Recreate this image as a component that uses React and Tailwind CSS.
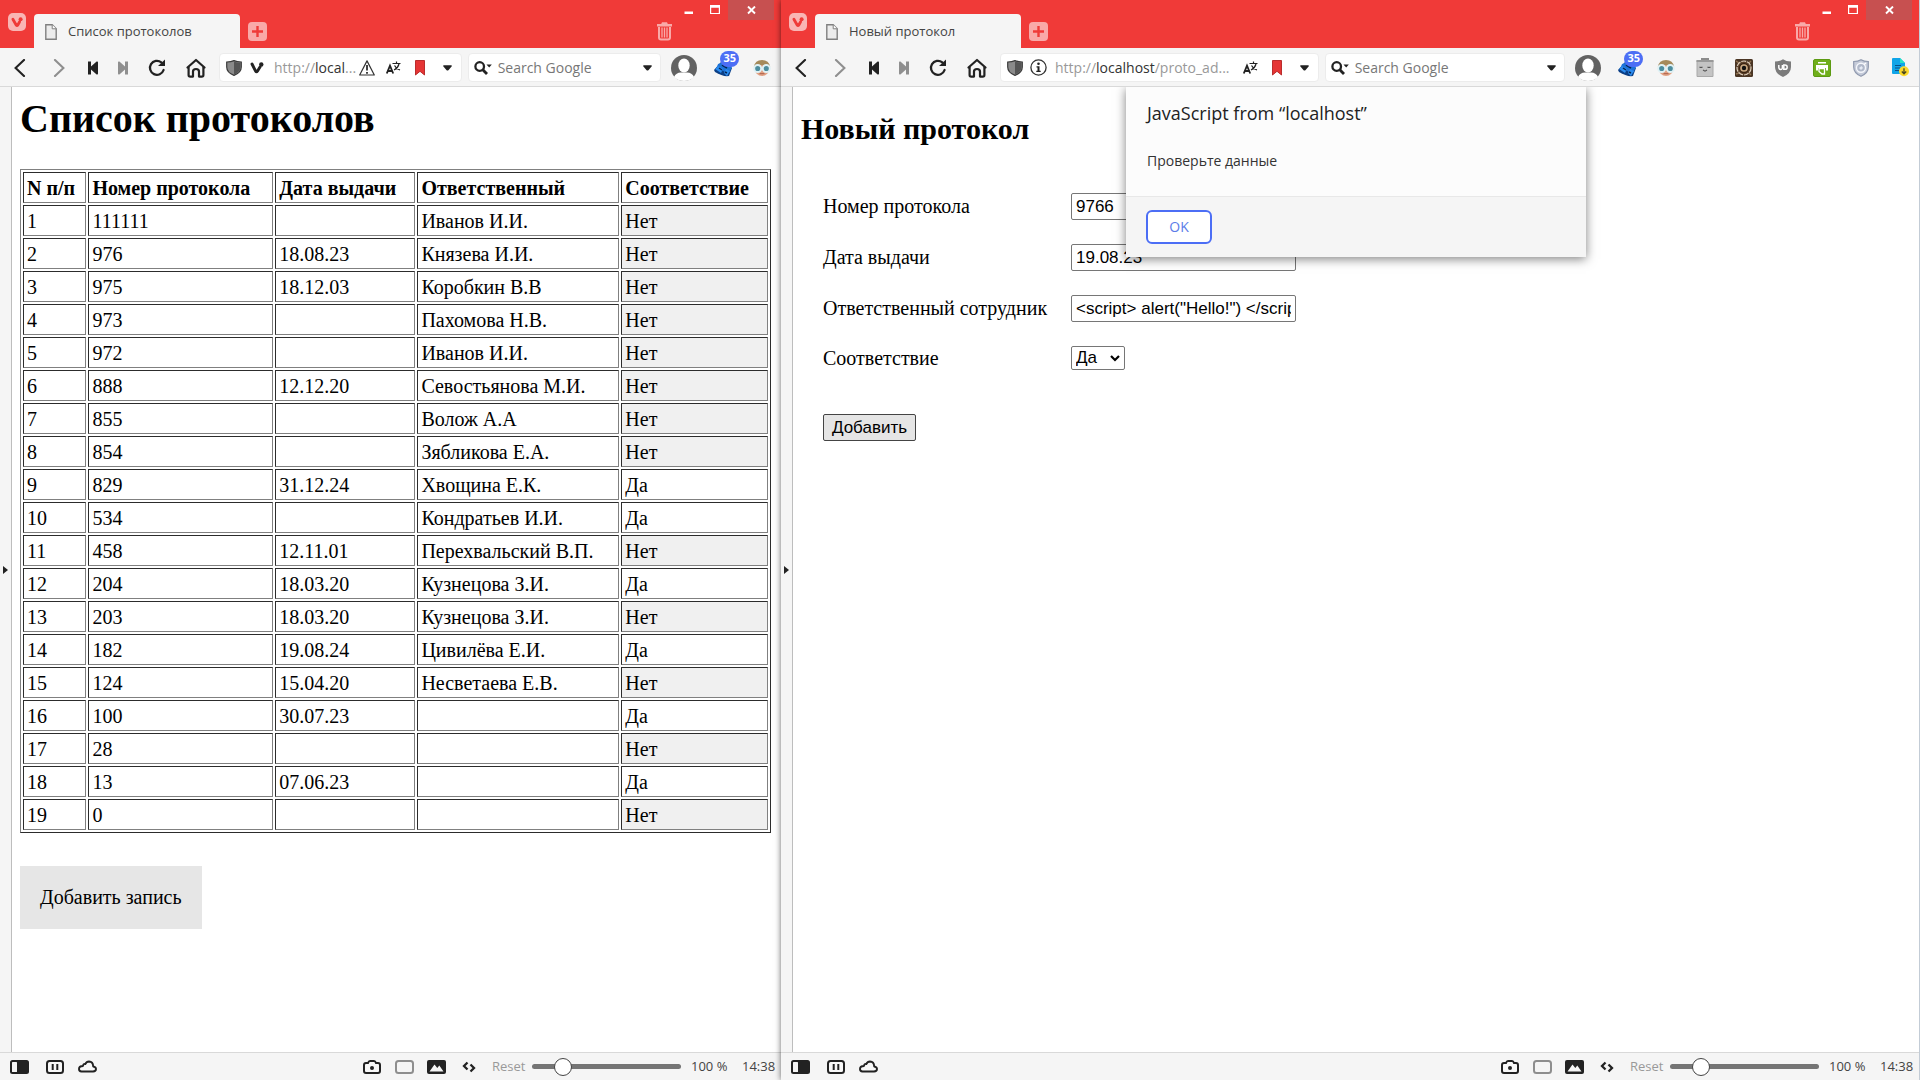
import React from "react";

const UI = "font-['Open_Sans',sans-serif]";

/* ---------- icons ---------- */

const VivaldiBadge = () => (
  <svg width="18" height="18" viewBox="0 0 18 18">
    <rect width="18" height="18" rx="5" fill="#f9b5b4" />
    <path d="M4.9 6.2 8.3 12.2Q9 13.2 9.7 12.2L11.6 8.8" fill="none" stroke="#ef3a38" strokeWidth="2.8" strokeLinecap="round" strokeLinejoin="round" />
    <circle cx="12.6" cy="6.3" r="2" fill="#ef3a38" />
  </svg>
);
const PageIcon = () => (
  <svg width="12" height="16" viewBox="0 0 12 16" className="shrink-0">
    <path d="M.8.8h6.4l4 4v10.4H.8z" fill="#ececec" stroke="#808080" strokeWidth="1.4" />
    <path d="M7.2.8v4h4" fill="#fff" stroke="#808080" />
  </svg>
);
const PlusBadge = () => (
  <svg width="19" height="19" viewBox="0 0 19 19">
    <rect width="19" height="19" rx="4" fill="#f9a9a8" />
    <path d="M9.5 4v11M4 9.5h11" stroke="#ef3a38" strokeWidth="2.4" />
  </svg>
);
const Trash = () => (
  <svg width="15" height="19" viewBox="0 0 15 19">
    <path d="M0 2h4.2L5 .2h5l.8 1.8H15v2.600H0z" fill="#f9a9a8" />
    <path d="M2 5v10.600Q2 17.600 4 17.600h7q2 0 2-2V5" fill="none" stroke="#f9a9a8" strokeWidth="2" />
    <path d="M5 5.500V15.500M7.500 5.500V15.500M10 5.500V15.500" stroke="#f9a9a8" strokeWidth="1.300" />
  </svg>
);
const Chevron = ({ dir, color }) => (
  <svg width="12" height="18" viewBox="0 0 12 18">
    <path d={dir === "left" ? "M10 1 1.600 9l8.400 8" : "M2 1 10.400 9l-8.400 8"} fill="none" stroke={color} strokeWidth="2.100" strokeLinecap="round" />
  </svg>
);
const Skip = ({ dir, color }) => (
  <svg width="10" height="14" viewBox="0 0 10 14">
    <path d={dir === "left" ? "M0 .5h3v5L8.600.600Q10 0 10 1.500v11q0 1.500-1.400.9L3 8.500v5H0z" : "M10 .5H7v5L1.400.600Q0 0 0 1.500v11q0 1.500 1.400.9L7 8.500v5h3z"} fill={color} />
  </svg>
);
const Reload = () => (
  <svg width="18" height="18" viewBox="0 0 18 18">
    <path d="M13.300 3.300A7 7 0 1 0 15.600 11" fill="none" stroke="#222" strokeWidth="2.300" strokeLinecap="round" />
    <path d="M17 .5V7h-7z" fill="#222" />
  </svg>
);
const HomeIcon = () => (
  <svg width="20" height="20" viewBox="0 0 20 20">
    <path d="M1.500 9.500 10 2l8.500 7.500" fill="none" stroke="#222" strokeWidth="2.200" strokeLinecap="round" strokeLinejoin="round" />
    <path d="M2.600 9v8q0 1.600 1.600 1.600H7v-5Q7 11 10 11t3 2.600v5h2.800q1.600 0 1.600-1.600V9" fill="none" stroke="#222" strokeWidth="2.200" strokeLinejoin="round" />
  </svg>
);
const Shield = () => (
  <svg width="16" height="16" viewBox="0 0 16 16" className="shrink-0">
    <path d="M.7 2Q5 2 8 .600 11 2 15.300 2V7q0 5.500-7.300 8.400Q.7 12.500.7 7z" fill="#8a8a8a" stroke="#3c3c3c" strokeWidth="1.200" />
    <path d="M8 1.400q3 1.200 6.600 1.200V7q0 4.800-6.600 7.700z" fill="#555" />
  </svg>
);
const VMark = () => (
  <svg width="14" height="12" viewBox="0 0 14 12">
    <path d="M2 2 5.600 9.200Q6.500 10.500 7.400 9.200L10 5" fill="none" stroke="#222" strokeWidth="2.900" strokeLinecap="round" strokeLinejoin="round" />
    <circle cx="11.300" cy="2.500" r="2.200" fill="#222" />
  </svg>
);
const Info = () => (
  <svg width="17" height="17" viewBox="0 0 17 17">
    <circle cx="8.500" cy="8.500" r="7.600" fill="#fff" stroke="#333" strokeWidth="1.300" />
    <circle cx="8.500" cy="4.700" r="1.300" fill="#222" />
    <path d="M6.500 7.200h3v4.500h1.200V13H6.300v-1.300h1.200V8.500h-1z" fill="#222" />
  </svg>
);
const Warn = () => (
  <svg width="16" height="16" viewBox="0 0 16 16" className="ml-[3px] shrink-0">
    <path d="M8 .900 15.300 15H.7z" fill="#fff" stroke="#333" strokeWidth="1.200" strokeLinejoin="round" />
    <path d="M8 5v5.500M8 12v1.700" stroke="#222" strokeWidth="1.700" />
  </svg>
);
const Translate = () => (
  <svg width="15" height="14" viewBox="0 0 15 14">
    <path d="M.8 12.500 4 4.700 7.200 12.500M2 10h4" fill="none" stroke="#222" strokeWidth="1.800" />
    <path d="M6.500 2.500h8M10.500.500v2M8 9q4-2 5-6M8.500 4.500q1.500 3 5.500 4.500" fill="none" stroke="#222" strokeWidth="1.200" />
  </svg>
);
const Bookmark = () => (
  <svg width="10" height="16" viewBox="0 0 10 16">
    <path d="M.5.500h9V15L5 11.300.5 15z" fill="#e53535" stroke="#b32020" strokeWidth=".9" />
  </svg>
);
const Caret = () => (
  <svg width="9" height="6" viewBox="0 0 10 6">
    <path d="M1 0h8q1.500.300.500 1.400L6 5.400q-1 .9-2 0L.5 1.400Q-.5.300 1 0z" fill="#222" />
  </svg>
);
const SearchGlyph = () => (
  <svg width="18" height="14" viewBox="0 0 18 14">
    <circle cx="5.700" cy="5.500" r="4.300" fill="none" stroke="#222" strokeWidth="2.300" />
    <path d="m8.800 8.700 4.200 4.300" stroke="#222" strokeWidth="2.800" />
    <path d="M12.500 3.500h5.300L15.200 6.500z" fill="#222" />
  </svg>
);
const Avatar = () => (
  <svg width="26" height="26" viewBox="0 0 26 26">
    <circle cx="13" cy="13" r="13" fill="#626262" />
    <ellipse cx="13" cy="10.500" rx="5.700" ry="7" fill="#fff" />
    <path d="M3 22q2-4.500 7-4.500h6q5 0 7 4.500-4 4-10 4T3 22z" fill="#fff" />
  </svg>
);
const Cards = () => (
  <svg width="26" height="26" viewBox="0 0 26 26">
    <path d="m4 15 7-8 11 6-3 8q-6 1-14-4z" fill="#0b3f86" />
    <path d="m8 9 6-2 8 5-3 6-4-1-8-5z" fill="#1d72d8" />
    <path d="m5 14 3-3 5 3-2 4zM14 18l2-4 4 2-3 5z" fill="#2b8cf0" />
    <path d="m12 10 5 3M9 13l3 2M15 17l2 1" stroke="#04244f" strokeWidth="1.500" />
  </svg>
);
const Face = () => (
  <svg width="18" height="18" viewBox="0 0 18 18">
    <circle cx="9" cy="9.500" r="7.500" fill="#e2a183" />
    <path d="M.8 8Q2 1 9 1t8.200 7q-2-1-3.200-2.500-5 1.500-10 0Q3 7 .8 8z" fill="#a58a5b" />
    <circle cx="4.700" cy="9.500" r="3.500" fill="#4d8d9e" stroke="#dff1f5" strokeWidth="1.900" />
    <circle cx="13.300" cy="9.500" r="3.500" fill="#4d8d9e" stroke="#dff1f5" strokeWidth="1.900" />
    <path d="M6.500 14.700h5" stroke="#a8604a" />
  </svg>
);
const Clipboard = () => (
  <svg width="18" height="19" viewBox="0 0 18 19">
    <path d="M5 0h8v3H5z" fill="#8b8b8b" />
    <path d="M1 2.500h16V18.500H1z" fill="#c4c4c4" stroke="#a8a8a8" />
    <path d="M.5 3h17" stroke="#999" strokeWidth="2" />
    <path d="M3.500 9q1.500 1 3 0M11.500 9q1.500 1 3 0M7 12l2 1.200 2-1.200" fill="none" stroke="#555" strokeWidth="1.100" />
  </svg>
);
const Eye = () => (
  <svg width="18" height="18" viewBox="0 0 18 18">
    <rect width="18" height="18" rx="1.500" fill="#4a3524" />
    <path d="m1 2 3 2M16 2l-2 2M1 15l3-1M16 16l-2-2" stroke="#8f7150" strokeWidth="1.500" />
    <circle cx="9" cy="9" r="7" fill="#5f432c" stroke="#ddcfbd" strokeWidth="1.200" strokeDasharray="5 1" />
    <circle cx="9" cy="9" r="4.500" fill="#c7a67f" stroke="#3a2413" strokeWidth="1.300" />
    <circle cx="9" cy="9" r="2.200" fill="#111" />
  </svg>
);
const UShield = () => (
  <svg width="18" height="18" viewBox="0 0 18 18">
    <path d="M1 2.500Q6 2.500 9 .300q3 2.200 8 2.200V8q0 6.500-8 10Q1 14.500 1 8z" fill="#7b7b7b" />
    <path d="M4.800 6v2.600q0 1.800 1.800 1.800T8.400 8.600V6" fill="none" stroke="#fff" strokeWidth="1.500" />
    <path d="M9.800 6.100h1q2.400 0 2.400 2.100t-2.400 2.100h-1z" fill="none" stroke="#fff" strokeWidth="1.500" />
  </svg>
);
const Printer = () => (
  <svg width="18" height="18" viewBox="0 0 18 18">
    <rect x=".5" y=".5" width="17" height="17" rx="1.500" fill="#6fae1a" stroke="#5c9a12" />
    <path d="M5 3h8v1.500H5zM3 6h12v5.500h-2V9H5v2.500H3z" fill="#fff" />
    <path d="M6 9.500h5.500V15H9l-3-2.500z" fill="#6fae1a" stroke="#fff" strokeWidth="1.300" />
  </svg>
);
const PaleShield = () => (
  <svg width="16" height="18" viewBox="0 0 16 18">
    <path d="M.7 2.500Q5 2.500 8 .700q3 1.800 7.300 1.800V8q0 6-7.300 9.300Q.7 14 .7 8z" fill="#c5cbd9" stroke="#8f99ae" strokeWidth="1.200" />
    <circle cx="8" cy="8.700" r="4.500" fill="#b0b8c9" stroke="#f4f6fb" strokeWidth="1.400" />
    <path d="m6 9 2.500-2 1.500 2-2 2z" fill="#e5eaf4" />
    <path d="m11 5.500 2-1.500" stroke="#fff" strokeWidth="1.400" />
  </svg>
);
const DocDown = () => (
  <svg width="18" height="19" viewBox="0 0 18 19">
    <path d="M1 1q0-1 1-1h7l5 5v11H2q-1 0-1-1z" fill="#10a5e8" />
    <path d="M9 0v5h5z" fill="#25e4c5" />
    <path d="M4 7.500h6M4 10h5M4 12.500h4" stroke="#0a4f87" strokeWidth="1.200" />
    <circle cx="13" cy="13.300" r="5" fill="#fcd92b" />
    <path d="M13 10.300v5M10.800 13.500l2.200 2.300 2.200-2.300" fill="none" stroke="#4a4620" strokeWidth="1.300" />
  </svg>
);
const PanelIcon = () => (
  <svg width="19" height="14" viewBox="0 0 19 14">
    <rect width="19" height="14" rx="2.500" fill="#222" />
    <rect x="2" y="2" width="5" height="10" rx=".5" fill="#f5f5f5" />
  </svg>
);
const TileIcon = () => (
  <svg width="18" height="14" viewBox="0 0 18 14">
    <rect x="1" y="1" width="16" height="12" rx="2.500" fill="#f8f8f8" stroke="#222" strokeWidth="2" />
    <path d="M6.700 4v6M11.300 4v6" stroke="#222" strokeWidth="2" />
  </svg>
);
const CloudIcon = () => (
  <svg width="19" height="13" viewBox="0 0 19 13">
    <path d="M3.500 11.500h11.500q3-.200 3-2.500 0-2-2.800-2.500Q15 1.600 11 1.500 8.500 1.500 7.300 4 5.300 3.500 5 6 1 6.200 1 9q0 2.300 2.500 2.500z" fill="#f8f8f8" stroke="#222" strokeWidth="1.900" strokeLinejoin="round" />
  </svg>
);
const CameraIcon = () => (
  <svg width="18" height="14" viewBox="0 0 18 14">
    <path d="M3 3h2q.700-2 2-2h4q1.300 0 2 2h2q2 0 2 2v6q0 2-2 2H3q-2 0-2-2V5q0-2 2-2z" fill="#f8f8f8" stroke="#222" strokeWidth="2" />
    <circle cx="9" cy="8" r="2" fill="#222" />
  </svg>
);
const FrameIcon = () => (
  <svg width="19" height="14" viewBox="0 0 19 14">
    <rect x="1" y="1" width="17" height="12" rx="2.500" fill="none" stroke="#8e8e8e" strokeWidth="2" />
  </svg>
);
const ImageIcon = () => (
  <svg width="19" height="14" viewBox="0 0 19 14">
    <rect width="19" height="14" rx="2" fill="#222" />
    <path d="m2.500 11.500 5-7 2.800 3.500 2-2.500 4.200 6z" fill="#f5f5f5" />
  </svg>
);
const CodeIcon = () => (
  <svg width="14" height="12" viewBox="0 0 14 12">
    <path d="M5.500 1.500 2 5l3.500 3.500M8.500 3.500 12 7l-3.500 3.500" fill="none" stroke="#222" strokeWidth="2.300" />
  </svg>
);

/* ---------- browser chrome ---------- */

const IconButton = ({ label, className = "", children }) => (
  <button type="button" aria-label={label} className={`flex shrink-0 items-center justify-center ${className}`}>
    {children}
  </button>
);

const extensions = [
  ["Читалка", Face],
  ["Буфер", Clipboard],
  ["Глаз", Eye],
  ["Блокировщик", UShield],
  ["Печать", Printer],
  ["Защита", PaleShield],
  ["Загрузки", DocDown],
];

function TitleBar({ title }) {
  return (
    <header className="flex h-12 items-start bg-[#f03a38]">
      <IconButton label="Меню" className="mt-[13px] ml-2"><VivaldiBadge /></IconButton>
      <div className="mt-[14px] ml-2 flex h-[34px] w-[206px] items-center gap-[11px] rounded-t-sm bg-[#f5f5f5] pt-[2px] pl-[11px] text-[13px] text-[#444]">
        <PageIcon />
        <span className="truncate">{title}</span>
      </div>
      <IconButton label="Новая вкладка" className="mt-[22px] ml-2"><PlusBadge /></IconButton>
      <div className="flex-1" />
      <IconButton label="Корзина" className="mt-[22px] mr-1"><Trash /></IconButton>
      <IconButton label="Свернуть" className="h-5 w-[25px]">
        <svg width="10" height="12" viewBox="0 0 10 12"><path d="M.5 7.500h8.500v2.500H.5z" fill="#fff" /></svg>
      </IconButton>
      <IconButton label="Развернуть" className="h-5 w-[27px]">
        <svg width="10" height="10" viewBox="0 0 10 10"><path d="M0 0h10v9H0zM1.200 2.700v5.200h7.600V2.700z" fill="#fff" fillRule="evenodd" /></svg>
      </IconButton>
      <IconButton label="Закрыть" className="mr-[7px] h-5 w-[46px] bg-[#c75050]">
        <svg width="9" height="9" viewBox="0 0 9 9"><path d="m1 .5 7 7M8 .5 1 7.500" stroke="#fff" strokeWidth="1.900" /></svg>
      </IconButton>
    </header>
  );
}

function Toolbar({ siteIcon, url, warn, extCount }) {
  return (
    <nav className="flex h-[39px] items-center border-b border-[#d9d9d9] bg-[#f5f5f5] pt-px">
      <IconButton label="Назад" className="h-9 w-[39px]"><Chevron dir="left" color="#222" /></IconButton>
      <IconButton label="Вперёд" className="h-9 w-[39px]"><Chevron dir="right" color="#8f8f8f" /></IconButton>
      <IconButton label="В начало" className="h-9 w-[30px]"><Skip dir="left" color="#222" /></IconButton>
      <IconButton label="В конец" className="h-9 w-[30px]"><Skip dir="right" color="#8f8f8f" /></IconButton>
      <IconButton label="Обновить" className="h-9 w-[38px]"><Reload /></IconButton>
      <IconButton label="Домой" className="h-9 w-[40px]"><HomeIcon /></IconButton>
      <div className="ml-[3px] flex h-[29px] min-w-0 grow-[76] basis-[166px] items-center rounded border border-[#ececec] bg-white pl-[6px]">
        <Shield />
        <span className="flex w-8 shrink-0 justify-center pr-[2px]">{siteIcon}</span>
        <span className="shrink-0 pt-px text-sm whitespace-nowrap text-[#999]">{url}</span>
        {warn && <Warn />}
        <span className="min-w-0 flex-1" />
        <IconButton label="Перевести" className="w-[27px]"><Translate /></IconButton>
        <IconButton label="Закладка" className="w-[27px]"><Bookmark /></IconButton>
        <IconButton label="История адресов" className="w-[27px]"><Caret /></IconButton>
      </div>
      <div className="ml-[6px] flex h-[29px] min-w-0 grow-[47] basis-[146px] items-center rounded border border-[#ececec] bg-white pr-[8px] pl-[5px]">
        <SearchGlyph />
        <input aria-label="Поиск" placeholder="Search Google" className="ml-[6px] w-0 min-w-0 flex-1 bg-transparent pt-px text-sm text-[#333] outline-none placeholder:text-[#777]" />
        <IconButton label="Варианты поиска"><Caret /></IconButton>
      </div>
      <IconButton label="Профиль" className="ml-[3px] h-9 w-[39px]"><Avatar /></IconButton>
      <IconButton label="Карточки" className="relative h-9 w-[39px]">
        <Cards />
        <span className="absolute top-px right-[3px] flex h-4 items-center rounded-full bg-[#4c6ef5] px-[3px] text-[11px] font-bold text-white">35</span>
      </IconButton>
      {extensions.slice(0, extCount).map(([label, Icon]) => (
        <IconButton key={label} label={label} className="h-9 w-[39px]"><Icon /></IconButton>
      ))}
    </nav>
  );
}

function StatusBar({ id }) {
  return (
    <footer className="flex h-7 items-center border-t border-[#d9d9d9] bg-[#f5f5f5] pr-[6px] pl-[10px] text-[13px] text-[#444]">
      <IconButton label="Панель"><PanelIcon /></IconButton>
      <IconButton label="Мозаика" className="ml-[17px]"><TileIcon /></IconButton>
      <IconButton label="Синхронизация" className="ml-[14px]"><CloudIcon /></IconButton>
      <div className="flex-1" />
      <IconButton label="Снимок"><CameraIcon /></IconButton>
      <IconButton label="Рамка" className="ml-[14px]"><FrameIcon /></IconButton>
      <IconButton label="Изображения" className="ml-[13px]"><ImageIcon /></IconButton>
      <IconButton label="Код" className="ml-4"><CodeIcon /></IconButton>
      <button type="button" className="ml-4 w-[32px] text-[#999]">Reset</button>
      <input
        id={id}
        type="range"
        aria-label="Масштаб"
        min="20"
        max="500"
        defaultValue="100"
        className="ml-2 h-[5px] w-[149px] appearance-none rounded-full bg-[#757575] [&::-webkit-slider-thumb]:size-[18px] [&::-webkit-slider-thumb]:appearance-none [&::-webkit-slider-thumb]:rounded-full [&::-webkit-slider-thumb]:border [&::-webkit-slider-thumb]:border-[#444] [&::-webkit-slider-thumb]:bg-white"
      />
      <label htmlFor={id} className="ml-[10px] w-[51px] whitespace-nowrap">100 %</label>
      <span className="w-[33px] whitespace-nowrap">14:38</span>
    </footer>
  );
}

function BrowserWindow({ id, title, siteIcon, url, warn, extCount, className = "", children }) {
  return (
    <section className={`flex min-w-0 flex-col bg-white ${UI} ${className}`}>
      <TitleBar title={title} />
      <Toolbar siteIcon={siteIcon} url={url} warn={warn} extCount={extCount} />
      <div className="flex flex-1">
        <aside className="flex w-3 shrink-0 items-center border-r border-[#bdbdbd] bg-[#f5f5f5]">
          <IconButton label="Показать панель" className="ml-[3px]">
            <svg width="5" height="8" viewBox="0 0 5 8"><path d="M0 0v8l5-4z" fill="#222" /></svg>
          </IconButton>
        </aside>
        <main className="relative min-w-0 flex-1 px-2 pt-[10px] font-['Liberation_Serif',serif] text-[20px] leading-[23px] text-black">
          {children}
        </main>
      </div>
      <StatusBar id={id} />
    </section>
  );
}

/* ---------- pages ---------- */

const rows = [
  ["111111", "", "Иванов И.И.", "Нет"],
  ["976", "18.08.23", "Князева И.И.", "Нет"],
  ["975", "18.12.03", "Коробкин В.В", "Нет"],
  ["973", "", "Пахомова Н.В.", "Нет"],
  ["972", "", "Иванов И.И.", "Нет"],
  ["888", "12.12.20", "Севостьянова М.И.", "Нет"],
  ["855", "", "Волож А.А", "Нет"],
  ["854", "", "Зябликова Е.А.", "Нет"],
  ["829", "31.12.24", "Хвощина Е.К.", "Да"],
  ["534", "", "Кондратьев И.И.", "Да"],
  ["458", "12.11.01", "Перехвальский В.П.", "Нет"],
  ["204", "18.03.20", "Кузнецова З.И.", "Да"],
  ["203", "18.03.20", "Кузнецова З.И.", "Нет"],
  ["182", "19.08.24", "Цивилёва Е.И.", "Да"],
  ["124", "15.04.20", "Несветаева Е.В.", "Нет"],
  ["100", "30.07.23", "", "Да"],
  ["28", "", "", "Нет"],
  ["13", "07.06.23", "", "Да"],
  ["0", "", "", "Нет"],
];

const cell = "h-[31px] border border-t-[#2c2c2c] border-r-[#808080] border-b-[#808080] border-l-[#2c2c2c] px-[3px] pt-1 pb-[2px] text-left";

function ProtocolList() {
  return (
    <>
      <h1 className="text-[40px] leading-[44px] font-bold">Список протоколов</h1>
      <table className="mt-7 w-[calc(100%_-_2px)] table-fixed border-separate border-spacing-[2px] border border-t-[#808080] border-r-[#2c2c2c] border-b-[#2c2c2c] border-l-[#808080]">
        <colgroup>
          <col className="w-[8.6%]" />
          <col className="w-[25.1%]" />
          <col className="w-[19%]" />
          <col className="w-[27.4%]" />
          <col />
        </colgroup>
        <thead>
          <tr>
            {["N п/п", "Номер протокола", "Дата выдачи", "Ответственный", "Соответствие"].map((h) => (
              <th key={h} className={`${cell} whitespace-nowrap`}>{h}</th>
            ))}
          </tr>
        </thead>
        <tbody>
          {rows.map(([num, date, person, ok], i) => (
            <tr key={num}>
              <td className={cell}>{i + 1}</td>
              <td className={cell}>{num}</td>
              <td className={cell}>{date}</td>
              <td className={`${cell} whitespace-nowrap`}>{person}</td>
              <td className={ok === "Нет" ? `${cell} bg-[#f0f0f0]` : cell}>{ok}</td>
            </tr>
          ))}
        </tbody>
      </table>
      <a href="#add" className="mt-[33px] inline-block bg-[#e6e6e6] p-5">Добавить запись</a>
    </>
  );
}

const field = "rounded-xs border border-[#767676] bg-white font-['Liberation_Sans',sans-serif] text-[17px]";
const formFields = [
  ["num", "Номер протокола", "9766"],
  ["date", "Дата выдачи", "19.08.23"],
  ["person", "Ответственный сотрудник", '<script> alert("Hello!") </script>'],
];

function NewProtocol() {
  return (
    <>
      <h2 className="mt-[15px] text-[30px] leading-[33px] font-bold">Новый протокол</h2>
      <form className="mt-12 ml-[22px] grid grid-cols-[248px_225px] items-center gap-y-6">
        {formFields.map(([id, label, value]) => (
          <React.Fragment key={id}>
            <label htmlFor={id}>{label}</label>
            <input id={id} defaultValue={value} className={`${field} h-[27px] w-full px-1`} />
          </React.Fragment>
        ))}
        <label htmlFor="ok">Соответствие</label>
        <span className="relative flex h-6 w-[54px]">
          <select id="ok" defaultValue="Да" className={`${field} w-full appearance-none pl-1 leading-[22px]`}>
            <option>Да</option>
            <option>Нет</option>
          </select>
          <svg width="10" height="7" viewBox="0 0 10 7" className="pointer-events-none absolute top-[9px] right-[5px]">
            <path d="m1 1 4 4 4-4" fill="none" stroke="#000" strokeWidth="2.200" />
          </svg>
        </span>
        <button type="button" className="mt-5 h-[27px] w-[93px] rounded-xs border border-[#444] bg-[#e5e5e5] font-['Liberation_Sans',sans-serif] text-[17px]">Добавить</button>
      </form>
      <div role="dialog" aria-labelledby="dlg-title" className={`absolute top-0 left-1/2 w-[460px] -translate-x-1/2 bg-[#fcfcfc] text-[#333] shadow-[0_2px_10px_rgba(0,0,0,0.5)] [clip-path:inset(0_-20px_-20px_-20px)] ${UI}`}>
        <div className="h-[109px] px-[21px] pt-[14px]">
          <h3 id="dlg-title" className="text-lg leading-6 font-medium text-[#222]">JavaScript from “localhost”</h3>
          <p className="mt-6 text-sm leading-6">Проверьте данные</p>
        </div>
        <div className="border-t border-[#e8e8e8] bg-[#f5f5f5] px-5 py-[13px]">
          <button type="button" className="block h-[34px] w-[66px] rounded-md border-2 border-[#4c6ef5] bg-white pb-px text-sm text-[#5c7ce8]">OK</button>
        </div>
      </div>
    </>
  );
}

export default function App() {
  return (
    <div className="grid min-h-screen grid-cols-[781fr_1139fr] overflow-hidden">
      <BrowserWindow
        id="zoom-list"
        title="Список протоколов"
        siteIcon={<VMark />}
        url={<>http://<span className="text-[#333]">local</span>...</>}
        warn
        extCount={1}
      >
        <ProtocolList />
      </BrowserWindow>
      <BrowserWindow
        id="zoom-new"
        title="Новый протокол"
        siteIcon={<Info />}
        url={<>http://<span className="text-[#333]">localhost</span>/proto_ad...</>}
        extCount={7}
        className="relative border-r border-[#c3ccd6] shadow-[0_0_6px_rgba(0,0,0,0.6)]"
      >
        <NewProtocol />
      </BrowserWindow>
    </div>
  );
}
